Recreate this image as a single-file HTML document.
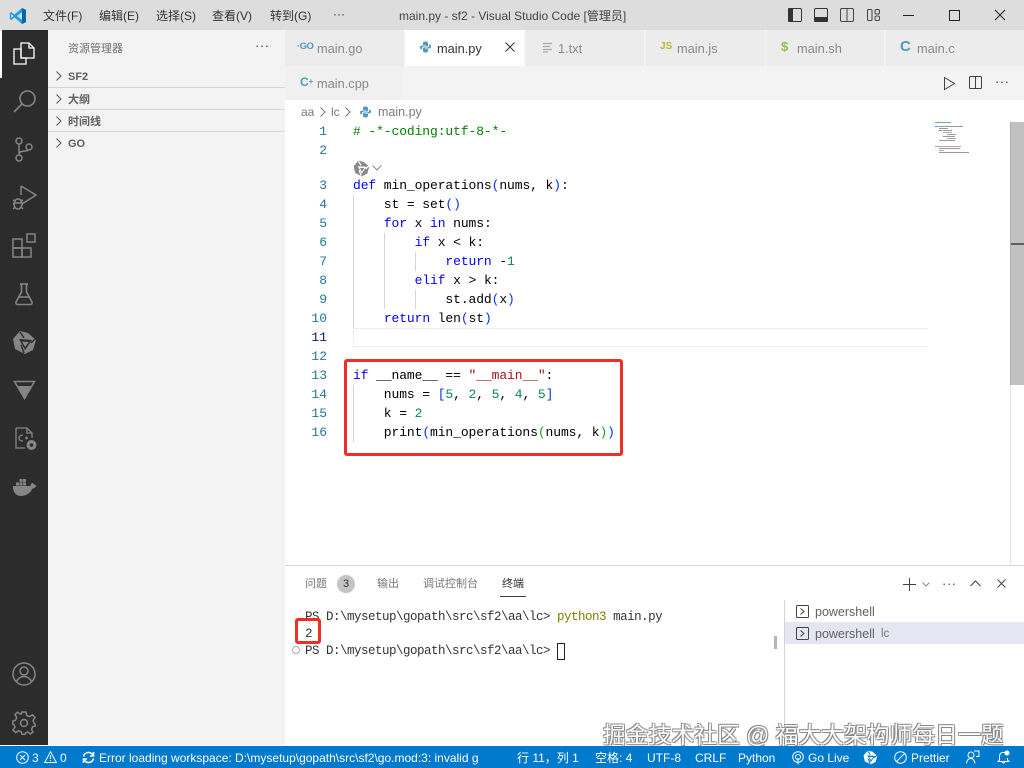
<!DOCTYPE html>
<html><head><meta charset="utf-8"><style>
html,body{margin:0;padding:0;width:1024px;height:768px;overflow:hidden;background:#fff}
body{position:relative;font-family:"Liberation Sans","Noto Sans CJK SC",sans-serif;color:#616161}
.a{position:absolute}
.t{position:absolute;white-space:pre;line-height:16px}
.m{position:absolute;white-space:pre;font-family:"Liberation Mono","Noto Sans CJK SC",monospace;font-size:13px;letter-spacing:-.1px;line-height:19px;color:#000}
.tm{position:absolute;white-space:pre;font-family:"Liberation Mono",monospace;font-size:12.5px;letter-spacing:-.5px;line-height:17px;color:#333}
.n{position:absolute;width:36px;left:291px;text-align:right;font-family:"Liberation Mono",monospace;font-size:13px;line-height:19px;color:#237893}
.k{color:#0000ff}.s{color:#a31515}.g{color:#098658}.c{color:#008000}.b{color:#0431fa}.b2{color:#319331}
.tab{position:absolute;background:#ececec;top:30px;height:36px}
.tl{font-size:12.8px;color:#8a8a8a;top:41px}
.mi{font-size:12px;color:#333;top:8px}
.sb{font-size:11px;font-weight:bold;color:#616161}
.st{position:absolute;top:750px;font-size:12px;color:#fff;white-space:pre;line-height:16px}
svg{position:absolute;overflow:visible}
.ig{position:absolute;width:1px;background:#d3d3d3}
</style></head><body>

<!-- title bar -->
<div class="a" style="left:0;top:0;width:1024px;height:30px;background:#dddddd"></div>
<svg style="left:9px;top:7px" width="18" height="18" viewBox="0 0 18 18"><path d="M13 1 L17 3 V15 L13 17 L5.5 10.5 L2.2 13 L.8 12 V6 L2.2 5 L5.5 7.5 Z" fill="#1f9cf0"/><path d="M13 5.2 V12.8 L8 9 Z" fill="#dddddd"/><path d="M2.2 6.8 V11.2 L4.5 9 Z" fill="#dddddd"/><path d="M13 1 L17 3 V15 L13 17 Z" fill="#0065a9"/></svg>
<div class="t mi" style="left:43px">文件(F)</div>
<div class="t mi" style="left:99px">编辑(E)</div>
<div class="t mi" style="left:156px">选择(S)</div>
<div class="t mi" style="left:212px">查看(V)</div>
<div class="t mi" style="left:270px">转到(G)</div>
<div class="t mi" style="left:333px;top:6px">···</div>
<div class="t" style="left:399px;top:8px;font-size:12px;color:#444">main.py - sf2 - Visual Studio Code [管理员]</div>
<svg style="left:788px;top:8px" width="15" height="14"><rect x=".5" y=".5" width="13" height="13" rx="1.5" fill="none" stroke="#333"/><rect x="0" y="0" width="5" height="14" rx="1" fill="#333"/></svg>
<svg style="left:814px;top:8px" width="15" height="14"><rect x=".5" y=".5" width="13" height="13" rx="1.5" fill="none" stroke="#333"/><rect x="0" y="9" width="14" height="5" rx="1" fill="#333"/></svg>
<svg style="left:840px;top:8px" width="15" height="14"><rect x=".5" y=".5" width="13" height="13" rx="1.5" fill="none" stroke="#444"/><path d="M7 0V14" stroke="#444"/></svg>
<svg style="left:867px;top:9px" width="14" height="13"><rect x=".5" y=".5" width="4.5" height="11" rx="1" fill="none" stroke="#444"/><rect x="8" y=".5" width="4.5" height="4.5" rx="1.5" fill="none" stroke="#444"/><rect x="8" y="7" width="4.5" height="4.5" rx="1.5" fill="none" stroke="#444"/></svg>
<div class="a" style="left:903px;top:15px;width:11px;height:1px;background:#222"></div>
<div class="a" style="left:949px;top:10px;width:9px;height:9px;border:1px solid #222"></div>
<svg style="left:994px;top:9px" width="12" height="12"><path d="M1 1L11 11M11 1L1 11" stroke="#222"/></svg>

<!-- activity bar -->
<div class="a" style="left:0;top:30px;width:48px;height:715px;background:#2c2c2c"></div>
<div class="a" style="left:0;top:30px;width:2px;height:48px;background:#fff"></div>
<svg style="left:13px;top:42px" width="22" height="24" viewBox="0 0 22 24" fill="none" stroke="#fff" stroke-width="1.3"><path d="M8 7H1V22H13V16H8V7Z"/><path d="M8 1H16L21 6V16H8ZM16 1V6H21"/></svg>
<svg style="left:13px;top:89px" width="24" height="24" viewBox="0 0 24 24" fill="none" stroke="#858585" stroke-width="1.6"><circle cx="14.5" cy="9.5" r="7.5"/><path d="M9 15L1 23"/></svg>
<svg style="left:14px;top:137px" width="20" height="26" viewBox="0 0 20 26" fill="none" stroke="#858585" stroke-width="1.5"><circle cx="5" cy="4" r="3"/><circle cx="5" cy="21" r="3"/><circle cx="15" cy="10" r="3"/><path d="M5 7V18M5 17C5 13 13 15 14 13"/></svg>
<svg style="left:12px;top:184px" width="26" height="28" viewBox="0 0 26 28" fill="none" stroke="#858585" stroke-width="1.5"><path d="M9 2L24 11L10 20"/><path d="M9 2V11"/><ellipse cx="6" cy="20" rx="4" ry="5"/><path d="M1 16L4 17M1 20H3M1 25L3 23M11 16L8 17M11 25L9 23M2 19H10"/></svg>
<svg style="left:12px;top:233px" width="25" height="26" viewBox="0 0 25 26" fill="none" stroke="#858585" stroke-width="1.5"><rect x="1" y="6" width="9" height="9"/><rect x="1" y="15" width="9" height="9"/><rect x="10" y="15" width="9" height="9"/><rect x="15" y="1" width="8" height="8"/></svg>
<svg style="left:14px;top:282px" width="20" height="24" viewBox="0 0 20 24" fill="none" stroke="#858585" stroke-width="1.6"><path d="M6 2H14M7.5 2V10L2 20Q1.5 22.5 4 22.5H16Q18.5 22.5 18 20L12.5 10V2M5 15H15"/></svg>
<svg style="left:12px;top:330px" width="25" height="25" viewBox="0 0 25 25"><path d="M8 1L16 3L24 10L21 20L13 24L3 19L1 9Z" fill="#858585"/><path d="M7 9L20 10L13 20Z" fill="#2c2c2c"/><path d="M10 11.500L17 12L13 17Z" fill="#858585"/><path d="M8 2L12 8M23 9L19 13M12 23L9 15" stroke="#2c2c2c" stroke-width="1.400" fill="none"/></svg>
<svg style="left:13px;top:380px" width="23" height="20" viewBox="0 0 23 20"><path d="M1.5 1.5H21.5L11.5 18.5Z" fill="none" stroke="#858585" stroke-width="1.5"/><path d="M5 6H18L11.5 18Z" fill="#858585"/></svg>
<svg style="left:14px;top:426px" width="24" height="26" viewBox="0 0 24 26" fill="none" stroke="#858585" stroke-width="1.3"><path d="M2 2H13L18 7V12M11 22H2V2M13 2V7H18"/><path d="M9 9Q5 9 5 12Q5 15 9 15M11 12H14M12.5 10.5V13.5"/><circle cx="17.500" cy="19" r="3.400" stroke-width="3.200"/></svg>
<svg style="left:12px;top:477px" width="25" height="20" viewBox="0 0 25 20" fill="#858585"><path d="M1 9H18.5Q19 5.5 21 6Q22 8 24.5 8.5Q23 11.5 20.5 11.5Q17 19 8 19Q1 18 1 9Z"/><rect x="4" y="5.5" width="3" height="3"/><rect x="7.5" y="5.5" width="3" height="3"/><rect x="11" y="5.5" width="3" height="3"/><rect x="7.5" y="2" width="3" height="3"/><rect x="11" y="2" width="3" height="3"/></svg>
<svg style="left:12px;top:662px" width="24" height="24" viewBox="0 0 24 24" fill="none" stroke="#858585" stroke-width="1.5"><circle cx="12" cy="12" r="11"/><circle cx="12" cy="9" r="4"/><path d="M4.5 19.5Q7 14.5 12 14.5Q17 14.5 19.5 19.5"/></svg>
<svg style="left:12px;top:711px" width="24" height="24" viewBox="0 0 24 24" fill="none" stroke="#858585" stroke-width="1.5"><path d="M10 1H14L14.7 4.5L17.5 5.700L20.5 3.700L23 6.500L21 9.300L22 12L23.300 13.500V15L20.700 15.700L19.500 18.500L21 21L18.500 23L15.700 21L13.500 22L13 23.300H10L9.300 20.800L6.500 19.700L3.700 21.500L1 19L3 16L2 13.500L.8 13V10L3.500 9.300L4.700 6.500L3 3.500L5.500 1.200L8.300 3.200L9.500 2.700Z"/><circle cx="12" cy="12" r="3.500"/></svg>

<!-- sidebar -->
<div class="a" style="left:48px;top:30px;width:237px;height:715px;background:#f3f3f3"></div>
<div class="t" style="left:68px;top:41px;font-size:11px;color:#6f6f6f">资源管理器</div>
<div class="t" style="left:255px;top:38px;font-size:13px;color:#444;letter-spacing:.5px">···</div>
<div class="a" style="left:48px;top:87px;width:237px;height:1px;background:#d4d4d4"></div>
<div class="a" style="left:48px;top:109px;width:237px;height:1px;background:#d4d4d4"></div>
<div class="a" style="left:48px;top:131px;width:237px;height:1px;background:#d4d4d4"></div>
<svg style="left:55px;top:71px" width="8" height="90" fill="none" stroke="#555"><path d="M1.5 .5L6 5L1.5 9.500M1.5 23.500L6 28L1.5 32.500M1.5 45.500L6 50L1.5 54.500M1.5 67.500L6 72L1.5 76.500"/></svg>
<div class="t sb" style="left:68px;top:69px">SF2</div>
<div class="t sb" style="left:68px;top:92px">大纲</div>
<div class="t sb" style="left:68px;top:114px">时间线</div>
<div class="t sb" style="left:68px;top:136px">GO</div>

<!-- tabs -->
<div class="a" style="left:285px;top:30px;width:739px;height:70px;background:#f3f3f3"></div>
<div class="tab" style="left:285px;width:119px"></div>
<div class="tab" style="left:405px;width:119px;background:#fff"></div>
<div class="tab" style="left:526px;width:118px"></div>
<div class="tab" style="left:646px;width:119px"></div>
<div class="tab" style="left:767px;width:117px"></div>
<div class="tab" style="left:886px;width:138px"></div>
<div class="tab" style="left:285px;top:66px;height:34px;width:118px;background:#f0f0f0"></div>

<div class="t" style="left:297px;top:39px;font-size:9.500px;font-weight:bold;color:#519aba;letter-spacing:-.5px">·GO</div>
<div class="t tl" style="left:317px">main.go</div>
<svg style="left:420px;top:41px" width="11" height="12" viewBox="0 0 11 12"><path d="M5.5 .5C3 .5 3 1.5 3 3V4H6V4.500H2C.5 4.500 0 5.500 0 6.500C0 8 1 8.500 2 8.500V7C2 6 3 5.500 4 5.500H7C8 5.500 8 5 8 4V2C8 1 7 .5 5.500 .5Z" fill="#519aba"/><path d="M5.500 11.500C8 11.500 8 10.500 8 9V8H5V7.500H9C10.500 7.500 11 6.500 11 5.500C11 4 10 3.500 9 3.500V5C9 6 8 6.500 7 6.500H4C3 6.500 3 7 3 8V10C3 11 4 11.500 5.500 11.500Z" fill="#519aba"/></svg>
<div class="t" style="left:437px;top:41px;font-size:12.8px;color:#333">main.py</div>
<svg style="left:505px;top:42px" width="10" height="10"><path d="M.5 .5L9.500 9.500M9.500 .5L.5 9.500" stroke="#333"/></svg>
<svg style="left:543px;top:43px" width="10" height="9" stroke="#aaa" stroke-width="1.200"><path d="M0 .5H9M0 3.500H7M0 6.500H9M0 9H5"/></svg>
<div class="t tl" style="left:558px">1.txt</div>
<div class="t" style="left:660px;top:39px;font-size:10px;font-weight:bold;color:#b7b73b">JS</div>
<div class="t tl" style="left:677px">main.js</div>
<div class="t" style="left:781px;top:39px;font-size:13px;font-weight:bold;color:#8dc149">$</div>
<div class="t tl" style="left:797px">main.sh</div>
<div class="t" style="left:900px;top:39px;font-size:15px;font-weight:bold;color:#519aba">C</div>
<div class="t tl" style="left:917px">main.c</div>
<div class="t" style="left:300px;top:74px;font-size:12px;font-weight:bold;color:#519aba">C<span style="font-size:8px;position:relative;top:-2px">+</span></div>
<div class="t tl" style="left:317px;top:76px">main.cpp</div>
<svg style="left:944px;top:77px" width="11" height="13" fill="none" stroke="#424242"><path d="M.5 .5L10.500 6.500L.5 12.500Z"/></svg>
<svg style="left:969px;top:76px" width="13" height="13" fill="none" stroke="#424242"><rect x=".5" y=".5" width="12" height="12" rx="1"/><path d="M6.500 .5V12.500"/></svg>
<div class="t" style="left:995px;top:74px;font-size:13px;color:#424242;letter-spacing:.5px">···</div>

<!-- breadcrumb -->
<div class="t" style="left:301px;top:104px;font-size:12px;color:#7a7a7a">aa</div>
<svg style="left:320px;top:107px" width="6" height="10" fill="none" stroke="#777"><path d="M.5 .5L5 5L.5 9.500"/></svg>
<div class="t" style="left:331px;top:104px;font-size:12px;color:#7a7a7a">lc</div>
<svg style="left:345px;top:107px" width="6" height="10" fill="none" stroke="#777"><path d="M.5 .5L5 5L.5 9.500"/></svg>
<svg style="left:360px;top:106px" width="11" height="12" viewBox="0 0 11 12"><path d="M5.500 .5C3 .5 3 1.500 3 3V4H6V4.500H2C.5 4.500 0 5.500 0 6.500C0 8 1 8.500 2 8.500V7C2 6 3 5.500 4 5.500H7C8 5.500 8 5 8 4V2C8 1 7 .5 5.500 .5Z" fill="#519aba"/><path d="M5.500 11.500C8 11.500 8 10.500 8 9V8H5V7.500H9C10.500 7.500 11 6.500 11 5.500C11 4 10 3.500 9 3.500V5C9 6 8 6.500 7 6.500H4C3 6.500 3 7 3 8V10C3 11 4 11.500 5.500 11.500Z" fill="#519aba"/></svg>
<div class="t" style="left:378px;top:104px;font-size:12.500px;color:#7a7a7a">main.py</div>

<!-- line numbers -->
<div class="n" style="top:122px">1</div><div class="n" style="top:141px">2</div><div class="n" style="top:176px">3</div><div class="n" style="top:195px">4</div><div class="n" style="top:214px">5</div><div class="n" style="top:233px">6</div><div class="n" style="top:252px">7</div><div class="n" style="top:271px">8</div><div class="n" style="top:290px">9</div><div class="n" style="top:309px">10</div><div class="n" style="top:328px;color:#0b216f">11</div><div class="n" style="top:347px">12</div><div class="n" style="top:366px">13</div><div class="n" style="top:385px">14</div><div class="n" style="top:404px">15</div><div class="n" style="top:423px">16</div>

<!-- code -->
<div class="ig" style="left:353px;top:195px;height:133px"></div>
<div class="ig" style="left:384px;top:233px;height:76px"></div>
<div class="ig" style="left:415px;top:252px;height:19px"></div>
<div class="ig" style="left:415px;top:290px;height:19px"></div>
<div class="ig" style="left:353px;top:385px;height:57px"></div>
<div class="a" style="left:353px;top:328px;width:574px;height:17px;border:1px solid #eeeeee;border-right:0"></div>
<div class="m" style="left:353px;top:122px"><span class="c"># -*-coding:utf-8-*-</span></div>
<svg style="left:353px;top:160px" width="17" height="17" viewBox="0 0 25 25"><path d="M8 1L16 3L24 10L21 20L13 24L3 19L1 9Z" fill="#8a8a8a"/><path d="M7 9L20 10L13 20Z" fill="#fff"/><path d="M10 11.500L17 12L13 17Z" fill="#8a8a8a"/><path d="M8 2L12 8M23 9L19 13M12 23L9 15" stroke="#fff" stroke-width="1.800" fill="none"/></svg>
<svg style="left:372px;top:165px" width="10" height="6" fill="none" stroke="#888"><path d="M.5 .5L5 5L9.500 .5"/></svg>
<div class="m" style="left:353px;top:176px"><span class="k">def</span> min_operations<span class="b">(</span>nums, k<span class="b">)</span>:</div>
<div class="m" style="left:353px;top:195px">    st = set<span class="b">()</span></div>
<div class="m" style="left:353px;top:214px">    <span class="k">for</span> x <span class="k">in</span> nums:</div>
<div class="m" style="left:353px;top:233px">        <span class="k">if</span> x &lt; k:</div>
<div class="m" style="left:353px;top:252px">            <span class="k">return</span> -<span class="g">1</span></div>
<div class="m" style="left:353px;top:271px">        <span class="k">elif</span> x &gt; k:</div>
<div class="m" style="left:353px;top:290px">            st.add<span class="b">(</span>x<span class="b">)</span></div>
<div class="m" style="left:353px;top:309px">    <span class="k">return</span> len<span class="b">(</span>st<span class="b">)</span></div>
<div class="m" style="left:353px;top:366px"><span class="k">if</span> __name__ == <span class="s">"__main__"</span>:</div>
<div class="m" style="left:353px;top:385px">    nums = <span class="b">[</span><span class="g">5</span>, <span class="g">2</span>, <span class="g">5</span>, <span class="g">4</span>, <span class="g">5</span><span class="b">]</span></div>
<div class="m" style="left:353px;top:404px">    k = <span class="g">2</span></div>
<div class="m" style="left:353px;top:423px">    print<span class="b">(</span>min_operations<span class="b2">(</span>nums, k<span class="b2">)</span><span class="b">)</span></div>

<!-- minimap -->
<svg style="left:935px;top:122px" width="40" height="34" stroke-width="1">
<path d="M0 .5H16" stroke="#6fb96f"/>
<path d="M0 4.500H3" stroke="#7777ff"/><path d="M4 4.500H28" stroke="#999"/>
<path d="M4 6.500H13" stroke="#999"/><path d="M4 8.500H7" stroke="#7777ff"/><path d="M8 8.500H17" stroke="#999"/>
<path d="M8 10.500H17" stroke="#aaa"/><path d="M12 12.500H21" stroke="#99a"/><path d="M8 14.500H20" stroke="#99a"/>
<path d="M12 16.500H21" stroke="#aaa"/><path d="M4 18.500H20" stroke="#99a"/>
<path d="M0 24.500H26" stroke="#c99"/><path d="M4 26.500H25" stroke="#99a"/><path d="M4 28.500H9" stroke="#aaa"/><path d="M4 30.500H34" stroke="#999"/>
</svg>

<!-- scrollbar -->
<div class="a" style="left:1010px;top:122px;width:14px;height:263px;background:#c1c1c1;border-left:1px solid #adadad;box-sizing:border-box"></div>
<div class="a" style="left:1011px;top:243px;width:13px;height:2px;background:#5f5f5f"></div>
<div class="a" style="left:1010px;top:385px;width:1px;height:180px;background:#e6e6e6"></div>

<!-- red boxes -->
<div class="a" style="left:344px;top:359px;width:279px;height:97px;box-sizing:border-box;border:3px solid #ef2f26;border-radius:3px"></div>

<!-- panel -->
<div class="a" style="left:285px;top:565px;width:739px;height:1px;background:#d8d8d8"></div>
<div class="t" style="left:305px;top:576px;font-size:11px;color:#777">问题</div>
<div class="a" style="left:337px;top:575px;width:18px;height:18px;border-radius:50%;background:#c4c4c4;color:#333;font-size:11px;line-height:18px;text-align:center">3</div>
<div class="t" style="left:377px;top:576px;font-size:11px;color:#777">输出</div>
<div class="t" style="left:423px;top:576px;font-size:11px;color:#777">调试控制台</div>
<div class="t" style="left:502px;top:576px;font-size:11px;color:#333">终端</div>
<div class="a" style="left:500px;top:596px;width:26px;height:1px;background:#424242"></div>
<svg style="left:903px;top:578px" width="13" height="13" stroke="#424242"><path d="M6.500 0V13M0 6.500H13"/></svg>
<svg style="left:922px;top:582px" width="8" height="5" fill="none" stroke="#888"><path d="M.5 .5L4 4L7.500 .5"/></svg>
<div class="t" style="left:942px;top:576px;font-size:13px;color:#424242;letter-spacing:.5px">···</div>
<svg style="left:970px;top:580px" width="11" height="7" fill="none" stroke="#424242"><path d="M.5 6L5.500 1L10.500 6"/></svg>
<svg style="left:997px;top:579px" width="9" height="9" stroke="#424242"><path d="M.5 .5L8.500 8.500M8.500 .5L.5 8.500"/></svg>

<div class="tm" style="left:305px;top:609px">PS D:\mysetup\gopath\src\sf2\aa\lc&gt; <span style="color:#7d7d00">python3</span> main.py</div>
<div class="tm" style="left:305px;top:626px">2</div>
<div class="tm" style="left:305px;top:643px">PS D:\mysetup\gopath\src\sf2\aa\lc&gt;</div>
<div class="a" style="left:557px;top:643px;width:6px;height:15px;border:1px solid #222"></div>
<div class="a" style="left:292px;top:646px;width:6px;height:6px;border:1px solid #aaa;border-radius:50%"></div>
<div class="a" style="left:295px;top:618px;width:26px;height:26px;box-sizing:border-box;border:3px solid #ef2f26;border-radius:3px"></div>

<div class="a" style="left:774px;top:636px;width:3px;height:13px;background:#b5b5b5"></div>
<div class="a" style="left:784px;top:600px;width:1px;height:145px;background:#d4d4d4"></div>
<div class="a" style="left:785px;top:622px;width:239px;height:22px;background:#e4e6f1"></div>
<svg style="left:796px;top:605px" width="13" height="13" fill="none" stroke="#424242"><rect x=".5" y=".5" width="12" height="12" rx="1"/><path d="M4.500 3.500L8 6.500L4.500 9.500"/></svg>
<svg style="left:796px;top:627px" width="13" height="13" fill="none" stroke="#424242"><rect x=".5" y=".5" width="12" height="12" rx="1"/><path d="M4.500 3.500L8 6.500L4.500 9.500"/></svg>
<div class="t" style="left:815px;top:604px;font-size:12.500px;color:#616161">powershell</div>
<div class="t" style="left:815px;top:626px;font-size:12.500px;color:#616161">powershell</div>
<div class="t" style="left:881px;top:626px;font-size:11.500px;color:#777">lc</div>

<!-- watermark -->
<div class="t" style="left:603px;top:722px;font-size:22.800px;line-height:26px;color:#fff;text-shadow:-1px -1px 0 #888,1px 1px 0 #888,1px -1px 0 #aaa,-1px 1px 0 #aaa">掘金技术社区 @ 福大大架构师每日一题</div>

<!-- status bar -->
<div class="a" style="left:0;top:746px;width:1024px;height:22px;background:#007acc"></div>
<svg style="left:16px;top:751px" width="13" height="13" fill="none" stroke="#fff"><circle cx="6.500" cy="6.500" r="5.800"/><path d="M4 4L9 9M9 4L4 9"/></svg>
<div class="st" style="left:32px">3</div>
<svg style="left:44px;top:751px" width="13" height="12" fill="none" stroke="#fff"><path d="M6.500 .8L12.300 11.500H.7Z"/><path d="M6.500 4.500V8M6.500 9V10"/></svg>
<div class="st" style="left:60px">0</div>
<svg style="left:82px;top:751px" width="13" height="13" fill="none" stroke="#fff" stroke-width="1.600"><path d="M1.500 5.500A5 5 0 0 1 11 4.500M11.500 7.500A5 5 0 0 1 2 8.500"/><path d="M11.500 1V5H8M1.500 12V8H5"/></svg>
<div class="st" style="left:99px">Error loading workspace: D:\mysetup\gopath\src\sf2\go.mod:3: invalid g</div>
<div class="st" style="left:517px">行 11，列 1</div>
<div class="st" style="left:595px">空格: 4</div>
<div class="st" style="left:647px">UTF-8</div>
<div class="st" style="left:695px">CRLF</div>
<div class="st" style="left:738px">Python</div>
<svg style="left:792px;top:751px" width="12" height="14" fill="none" stroke="#fff"><circle cx="6" cy="6" r="5.300"/><circle cx="6" cy="6" r="2.500"/><path d="M6 7V13.500"/></svg>
<div class="st" style="left:808px">Go Live</div>
<svg style="left:863px;top:750px" width="15" height="15" viewBox="0 0 25 25"><path d="M8 1L16 3L24 10L21 20L13 24L3 19L1 9Z" fill="#fff"/><path d="M7 9L20 10L13 20Z" fill="#007acc"/><path d="M10 11.500L17 12L13 17Z" fill="#fff"/><path d="M8 2L12 8M23 9L19 13M12 23L9 15" stroke="#007acc" stroke-width="1.800" fill="none"/></svg>
<svg style="left:894px;top:751px" width="13" height="13" fill="none" stroke="#fff"><circle cx="6.500" cy="6.500" r="5.800"/><path d="M2.500 10.500L10.500 2.500"/></svg>
<div class="st" style="left:911px">Prettier</div>
<svg style="left:966px;top:750px" width="14" height="14" fill="none" stroke="#fff"><circle cx="5" cy="5" r="3"/><path d="M.5 13.500Q1 8.500 5 8.500Q8 8.500 9 13.500M8 1H13V6.500H10"/></svg>
<svg style="left:997px;top:750px" width="13" height="14" fill="none" stroke="#fff"><path d="M8 2.500Q2.500 1.500 2.500 7V10L1 11.500H12L10.500 10V8M5 12Q6.500 14 8 12"/><circle cx="10" cy="3" r="2.500" fill="#fff" stroke="none"/></svg>

</body></html>
